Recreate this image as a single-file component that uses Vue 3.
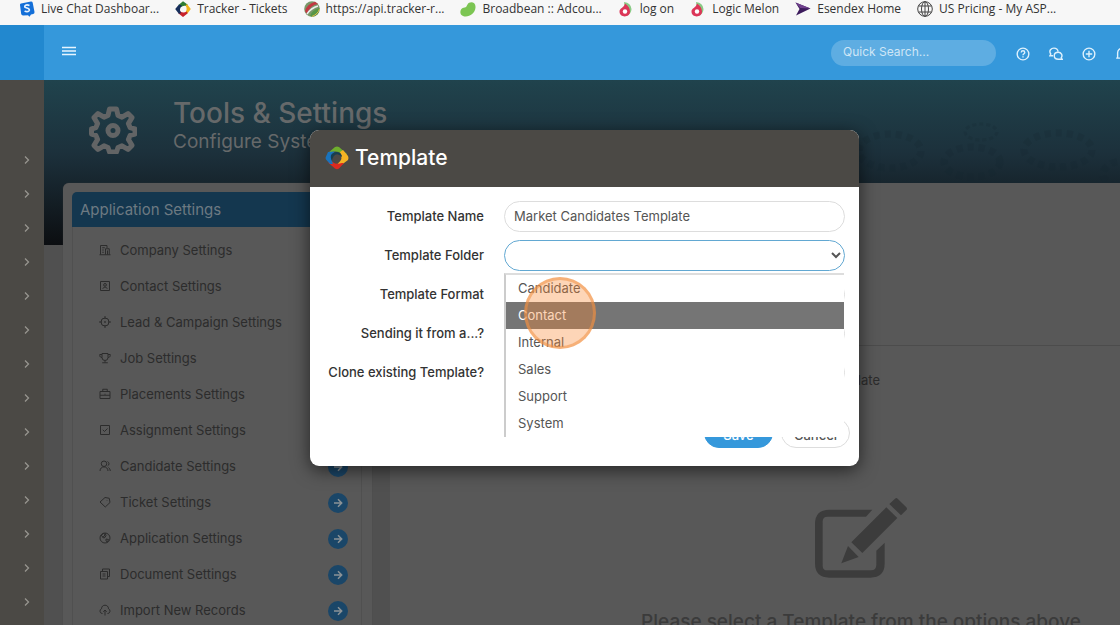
<script setup>
import { ref } from 'vue'

const bookmarks = [
  { icon: 'chat', text: 'Live Chat Dashboar...' },
  { icon: 'tracker', text: 'Tracker - Tickets' },
  { icon: 'api', text: 'https://api.tracker-r...' },
  { icon: 'bean', text: 'Broadbean :: Adcou...' },
  { icon: 'melon', text: 'log on' },
  { icon: 'melon', text: 'Logic Melon' },
  { icon: 'esendex', text: 'Esendex Home' },
  { icon: 'globe', text: 'US Pricing - My ASP...' }
]

const settings = [
  { text: 'Company Settings', d: 'M1 21.500h22M3 21V3h13v5M13 21V9.500h7.500V21M6.500 7.500h5M6.500 12h3M6.500 16.500h3M17 13v8' },
  { text: 'Contact Settings', d: 'M3 3h18v18H3zM12 7a2.500 2.500 0 1 0 0 5.500A2.500 2.500 0 1 0 12 7M7.500 17.500c1-4 8-4 9 0' },
  { text: 'Lead & Campaign Settings', d: 'M12 4a8 8 0 1 0 0 16 8 8 0 1 0 0-16M12 0v6M12 18v6M0 12h6M18 12h6M12 11a1 1 0 1 0 0 2 1 1 0 1 0 0-2' },
  { text: 'Job Settings', d: 'M6 3h12v8a6 6 0 0 1-12 0zM12 17v4M6.500 21.500h11M6 5H1.500v2c0 2.500 2 4 4.500 4M18 5h4.500v2c0 2.500-2 4-4.500 4' },
  { text: 'Placements Settings', d: 'M2 7h20v14H2zM7.500 7V2.500h9V7M2 14.500h20M11 12.500h2' },
  { text: 'Assignment Settings', d: 'M3 3h18v18H3zM7.500 11.500l3.500 3.500 6-6' },
  { text: 'Candidate Settings', d: 'M10 2a5.500 5.500 0 1 0 0 11 5.500 5.500 0 1 0 0-11M2 22c0-11 16-11 16 0M17 3c4 2 4 7 0 9M19 15c2 1.500 3.500 4 3.500 7' },
  { text: 'Ticket Settings', d: 'M12 3l8.500 1.500L22 13l-9.500 9L2 12zM16 8.500v1' },
  { text: 'Application Settings', d: 'M12 2a10 10 0 1 0 0 20 10 10 0 1 0 0-20M4 6l5 6 3-1 2-4-2-5M5 6l4-3 3 2-2 4-3 1M14 14l5 1-2 5-3-2z' },
  { text: 'Document Settings', d: 'M7 7V2h14v15h-4M3 7h14v15H3zM7 12h6M7 16h6' },
  { text: 'Import New Records', d: 'M7 19H6a5 5 0 0 1-1-9.500C5 0 19 0 19 9.500A5 5 0 0 1 18 19h-1M12 23V12M8.500 15.500l3.500-3.500 3.500 3.500' }
]

const folders = ['Candidate', 'Contact', 'Internal', 'Sales', 'Support', 'System']
const active = ref('Contact')
const folder = ref('')
const name = ref('Market Candidates Template')
const query = ref('')
</script>

<template>
  <div class="window">
    <nav class="bookmarks" aria-label="Bookmarks">
      <a v-for="b in bookmarks" :key="b.text" href="#" class="bookmark">
        <svg class="fav" viewBox="0 0 16 16" aria-hidden="true">
          <template v-if="b.icon === 'chat'">
            <path d="M2 2.500 12 .5q1.500 0 1.700 1.200L15.500 11q.2 1.500-1.200 1.900l-2.300.6-1.500 2.300-1.500-1.600-5 .2q-1.500 0-1.800-1.400L1 4Q.8 2.800 2 2.500z" fill="#146fd8" />
            <path d="M10.500 4.500Q7 3 5.800 5.200C5 7.500 10.800 6.500 10.300 9.200 9.500 11.200 7 10.800 5.600 10" fill="none" stroke="#e6f2ff" stroke-width="1.700" />
          </template>
          <template v-else-if="b.icon === 'tracker'">
            <path d="M8 .2 12.500 3.500 13 6Q9 3.500 5.500 6.500L3.500 4z" fill="#2f7d33" />
            <path d="M12 3 15.800 8 12.500 12.500 10 12Q13 8 10.500 4.500z" fill="#f0b51e" />
            <path d="M12.500 12.500 8 16 3.500 12.500 4.500 9.500Q7 13 12 10.500z" fill="#c8232c" />
            <path d="M4 3.500.2 8 4 13l2-1Q3.500 8 7 4.500z" fill="#172f5c" />
          </template>
          <template v-else-if="b.icon === 'api'">
            <circle cx="8" cy="8" r="7.800" fill="#79986a" />
            <path d="M1 10Q3 3 11 .8L14 3Q6 4 3 13z" fill="#c23943" />
            <path d="M3 13Q7 7 14 5" fill="none" stroke="#eee" stroke-width="1.500" />
            <path d="M6 15Q8 9 15.500 7 15 15 8 15.800z" fill="#559746" />
            <path d="M8 15.500Q14 13 15.500 8" fill="none" stroke="#e2bd50" />
          </template>
          <path v-else-if="b.icon === 'bean'" d="M4.500 6.500Q6 7 7.500 3.500C9 0 16 0 15.500 6.500 15 13 8 17 3 15-1 13.500-.5 7 4.500 6.500z" fill="#7cc553" />
          <template v-else-if="b.icon === 'melon'">
            <path d="M6 1Q13 2 13.500 8 13.500 13 8 15z" fill="#8acb86" />
            <path d="M7 2.500Q12 6 12 10.500C12 17 1.500 17 1.500 10.500 1.500 7 6 7 7 2.500z" fill="#dc3658" />
            <circle cx="7" cy="10.500" r="2.200" fill="#fff" />
          </template>
          <template v-else-if="b.icon === 'esendex'">
            <path d="M.5 1.500 15.500 7.500 1 14.500 4.500 8z" fill="#3c1b5c" />
            <path d="M.5 1.500 15.500 7.500 5 7z" fill="#70408d" />
          </template>
          <g v-else fill="none" stroke="#444" stroke-width="1">
            <circle cx="8" cy="8" r="7.300" />
            <ellipse cx="8" cy="8" rx="3.500" ry="7.300" />
            <path d="M8 .7v14.600M1.500 5h13M1.500 11h13" />
          </g>
        </svg>
        <span>{{ b.text }}</span>
      </a>
    </nav>

    <div class="page">
      <header class="topbar">
        <div class="brand"></div>
        <button class="plain menu" aria-label="Toggle menu">
          <svg viewBox="0 0 14 10"><path d="M0 1.500h14M0 5h14M0 8.500h14" stroke="#e8f5ff" stroke-width="1.600" /></svg>
        </button>
        <input v-model="query" class="search" type="text" aria-label="Quick Search" placeholder="Quick Search..." />
        <div class="actions">
          <button class="plain" aria-label="Help">
            <svg viewBox="0 0 24 24"><circle cx="12" cy="12" r="10" /><path d="M9 9.500c0-4 6-4 6 0 0 2-3 2-3 4.500M12 16v2" /></svg>
          </button>
          <button class="plain" aria-label="Messages">
            <svg viewBox="0 0 24 24"><path d="M7 15H1.500l1.500-3C-1 6 4 2 8.500 2c4 0 6.500 2.500 7 5.500M16 9c-5 0-7 3-7 6 0 3.500 3 6 7 6h6.500l-1.500-2.500c3-4 0-9.500-5-9.500z" /></svg>
          </button>
          <button class="plain" aria-label="Add">
            <svg viewBox="0 0 24 24"><circle cx="12" cy="12" r="10" /><path d="M12 6.500v11M6.500 12h11" /></svg>
          </button>
          <button class="plain" aria-label="Notifications">
            <svg viewBox="0 0 24 24"><path d="M2 19h20M4.500 18.500V10c0-10 15-10 15 0v8.500M9 22.500h6" /></svg>
          </button>
        </div>
      </header>

      <div class="body">
        <aside class="rail">
          <button v-for="n in 14" :key="n" class="plain rail-item" :aria-label="'Expand section ' + n">
            <svg viewBox="0 0 6 8"><path d="M1 .5 4.500 4 1 7.500" fill="none" stroke="#97958f" stroke-width="1.300" /></svg>
          </button>
        </aside>

        <main class="main">
          <section class="hero">
            <svg class="hero-gear" viewBox="0 0 48 48" aria-hidden="true">
              <path d="M20.500 3h7l1.500 6.500 4 1.700 6-3.600 4 4-3.600 6 1.700 4 4.900 1.400v5l-4.900 1.400-1.700 4 3.600 6-4 4-6-3.600-4 1.700-1.500 4.500h-7L19 41.500l-4-1.700-6 3.600-4-4 3.600-6-1.700-4L2.500 28v-5l4.400-1.400 1.700-4-3.600-6 4-4 6 3.600 4-1.700z" fill="none" stroke="#626465" stroke-width="5" stroke-linejoin="round" />
              <circle cx="24" cy="24.500" r="5" fill="none" stroke="#626465" stroke-width="5" />
            </svg>
            <div class="hero-text">
              <h1>Tools &amp; Settings</h1>
              <p>Configure System</p>
            </div>
            <svg class="cogs" viewBox="0 0 280 62" aria-hidden="true">
              <g fill="none" stroke="#14262f">
                <ellipse cx="50" cy="31" rx="31" ry="17" stroke-width="7" stroke-dasharray="6 5" />
                <ellipse cx="132" cy="42" rx="28" ry="15" stroke-width="7" stroke-dasharray="6 5" />
                <ellipse cx="141" cy="12" rx="16" ry="8" stroke-width="3" stroke-dasharray="4 3" />
                <ellipse cx="218" cy="30" rx="34" ry="17" stroke-width="7" stroke-dasharray="6 5" />
                <ellipse cx="283" cy="54" rx="20" ry="13" stroke-width="7" stroke-dasharray="6 5" />
              </g>
            </svg>
          </section>

          <div class="columns">
            <section class="panel">
              <h2>Application Settings</h2>
              <ul class="settings">
                <li v-for="s in settings" :key="s.text">
                  <svg class="s-icon" viewBox="0 0 24 24" aria-hidden="true"><path :d="s.d" /></svg>
                  <span>{{ s.text }}</span>
                  <button class="plain go" :aria-label="'Open ' + s.text">
                    <svg viewBox="0 0 10 10"><path d="M1 5h7.500M5 1.300 8.700 5 5 8.700" fill="none" stroke="#8b9296" stroke-width="1.500" /></svg>
                  </button>
                </li>
              </ul>
            </section>
            <section class="detail">
              <div class="detail-head"></div>
              <div class="detail-row"><span>Template</span></div>
              <div class="empty">
                <svg viewBox="0 0 276 240" aria-hidden="true">
                  <path transform="translate(-585 -52)" d="M757 87H628Q585 87 585 130V248Q585 291 628 291H751Q794 291 794 248V186L769 210V252Q769 269 753 269H622Q608 269 608 255V122Q608 108 622 108H738ZM799 80 832 112 727 217 694 185ZM825 54Q829 50 833 54L859 80Q863 84 859 88L843 104 808 70ZM684 196 716 229 664 248Z" fill="#3c3c3c" />
                </svg>
                <p>Please select a Template from the options above</p>
              </div>
            </section>
          </div>
        </main>
      </div>
    </div>

    <div class="overlay">
      <form class="dialog" role="dialog" aria-labelledby="dialog-title" @submit.prevent>
        <div class="dialog-head">
          <svg viewBox="0 0 24 24" aria-hidden="true">
            <path d="M3 7 10 1Q12 0 14 1L22 8 19 13Q17 5 10 5.500 6 5.500 3 7z" fill="#6fae2d" />
            <path d="M18 4 23 10Q24 12 23 14L15 20 12.500 18Q19 13 15 6z" fill="#f5b324" />
            <path d="M19 17 14 22.500Q12 24 10 22.500L3.500 17 5 12Q8 20 17 17z" fill="#dc2a20" />
            <path d="M3 6 10 5.500Q4 10 8 18L5 18 1 13.500Q0 12 1 10.500z" fill="#1973bd" />
            <path d="M7 15Q3 7 12 6 17 7 17 11 12 6 8.500 10.500 7 13 7 15z" fill="#173f50" />
          </svg>
          <h2 id="dialog-title">Template</h2>
        </div>
        <div class="fields">
          <label for="t-name">Template Name</label>
          <input id="t-name" v-model="name" type="text" />
          <label for="t-folder">Template Folder</label>
          <div class="combo">
            <select id="t-folder" v-model="folder" class="focused">
              <option value=""></option>
              <option v-for="f in folders" :key="f">{{ f }}</option>
            </select>
            <ul class="popup" role="listbox" aria-label="Template Folder">
              <li v-for="f in folders" :key="f" role="option" :aria-selected="f === active" :class="{ active: f === active }">{{ f }}</li>
            </ul>
            <span class="click-ring"></span>
          </div>
          <label for="t-format">Template Format</label>
          <input id="t-format" type="text" />
          <label for="t-from">Sending it from a...?</label>
          <input id="t-from" type="text" />
          <label for="t-clone">Clone existing Template?</label>
          <input id="t-clone" type="text" />
        </div>
        <div class="buttons">
          <button class="btn save" type="submit">Save</button>
          <button class="btn cancel" type="button">Cancel</button>
        </div>
      </form>
    </div>
  </div>
</template>

<style>
body {
  overflow: hidden;
  background: #505050;
}
</style>

<style scoped>
* {
  box-sizing: border-box;
}
.window {
  position: relative;
  height: 100vh;
  overflow: hidden;
  font-family: Inter, "Open Sans", sans-serif;
  font-size: 13px;
}
h1, h2, p, ul {
  margin: 0;
  padding: 0;
}
ul {
  list-style: none;
}
svg {
  display: block;
}
.plain {
  border: 0;
  padding: 0;
  background: none;
}

/* Bookmark strip */
.bookmarks {
  display: flex;
  gap: 16px;
  height: 25px;
  padding: 0 19px;
  background: #f7f7f7;
  font-family: "Open Sans", "Noto Sans", sans-serif;
  font-size: 12px;
  line-height: 18px;
}
.bookmark {
  display: flex;
  gap: 6px;
  flex: none;
  color: #333;
  text-decoration: none;
}
.fav {
  width: 16px;
  height: 16px;
  margin-top: 1px;
}

/* Top bar */
.page {
  width: calc(100% + 49px);
}
.topbar {
  display: flex;
  align-items: center;
  height: 55px;
  background: #3598db;
}
.brand {
  width: 44px;
  height: 100%;
  background: #2288cf;
}
.menu {
  margin: 0 auto 4px 18px;
}
.menu svg {
  width: 14px;
  height: 10px;
}
.search {
  width: 165px;
  height: 26px;
  border: 0;
  border-radius: 13px;
  padding: 0 12px 2px;
  background: #5eade2;
  color: #fff;
  font: 12px Inter, sans-serif;
}
.search::placeholder {
  color: #cfe6f6;
  opacity: 1;
}
.actions {
  display: flex;
  gap: 19px;
  margin: 2px 40px 0 20px;
}
.actions svg {
  width: 14px;
  height: 14px;
  fill: none;
  stroke: #def1fd;
  stroke-width: 2.400;
}

/* Body */
.body {
  display: flex;
}
.rail {
  width: 44px;
  flex: none;
  padding: 63px 14px 40px 0;
  background: #4b4945;
}
.rail-item {
  display: flex;
  align-items: center;
  justify-content: flex-end;
  width: 100%;
  height: 34px;
}
.rail-item svg {
  width: 6px;
  height: 8px;
}
.main {
  flex: 1;
  min-width: 0;
  background: #505050;
}
.hero {
  position: relative;
  display: flex;
  gap: 36px;
  height: 165px;
  padding: 16px 0 0 45px;
  background: linear-gradient(#20434d, #1c303b 45%, #0c0e11);
  color: #66696a;
}
.hero-gear {
  width: 48px;
  height: 48px;
  margin-top: 10px;
}
.hero h1 {
  font-size: 28px;
  font-weight: 500;
  line-height: 34px;
}
.hero p {
  font-size: 19px;
  line-height: 24px;
}
.cogs {
  position: absolute;
  top: 40px;
  right: 49px;
  width: 280px;
  height: 62px;
  opacity: 0.2;
}
.columns {
  position: relative;
  display: flex;
  gap: 18px;
  margin: -62px -163px 0 19px;
}
.panel {
  width: 309px;
  flex: none;
  padding: 9px 10px 9px 9px;
  border-radius: 6px 6px 0 0;
  background: #585858;
  box-shadow: 0 0 1px #444;
}
.panel h2 {
  padding: 0 8px;
  border-radius: 5px 5px 0 0;
  background: #14374f;
  color: #6d7a82;
  font-size: 15px;
  font-weight: 400;
  line-height: 35px;
}
.settings {
  padding: 5px 13px 4px 26px;
  border: 1px solid #505050;
  border-top: 0;
  color: #2c2c2c;
}
.settings li {
  display: flex;
  align-items: center;
  gap: 9px;
  height: 36px;
}
.s-icon {
  width: 12px;
  height: 12px;
  fill: none;
  stroke: #2c2c2c;
  stroke-width: 2;
}
.go {
  display: grid;
  place-items: center;
  width: 20px;
  height: 20px;
  margin: 2px 0 0 auto;
  border-radius: 50%;
  background: #1a4668;
}
.go svg {
  width: 10px;
  height: 10px;
}
.detail {
  flex: 1;
  background: #585858;
}
.detail-head {
  height: 163px;
  border-bottom: 1px solid #4c4c4c;
}
.detail-row {
  display: flex;
  width: 490px;
  height: 68px;
  align-items: center;
  justify-content: flex-end;
  color: #2c2c2c;
}
.empty {
  display: flex;
  flex-direction: column;
  align-items: center;
  padding-top: 84px;
  color: #3b3b3b;
}
.empty svg {
  width: 92px;
  height: 80px;
}
.empty p {
  margin-top: 30px;
  font-size: 19px;
  font-weight: 500;
  line-height: 28px;
}

/* Dialog */
.overlay {
  position: absolute;
  inset: 0 -49px 0 0;
  display: flex;
  align-items: flex-start;
  justify-content: center;
  padding-top: 130px;
}
.dialog {
  width: 100%;
  max-width: 549px;
  border-radius: 9px;
  background: #fff;
  box-shadow: 0 4px 18px rgba(0, 0, 0, 0.6);
}
.dialog-head {
  display: flex;
  align-items: center;
  gap: 6px;
  height: 57px;
  padding: 0 15px 2px;
  border-radius: 9px 9px 0 0;
  background: #4b4945;
  color: #fff;
}
.dialog-head svg {
  width: 24px;
  height: 24px;
}
.dialog-head h2 {
  font-size: 21px;
  font-weight: 500;
}
.fields {
  display: grid;
  grid-template-columns: 174px 1fr;
  column-gap: 20px;
  row-gap: 8px;
  align-items: center;
  padding: 14px 14px 0 0;
}
.fields label {
  padding-bottom: 2px;
  color: #333;
  font-weight: 500;
  text-align: right;
}
.fields input,
.fields select {
  display: block;
  width: 100%;
  height: 31px;
  border: 1px solid #ddd;
  border-radius: 16px;
  padding: 0 9px 2px;
  background: #fff;
  color: #555;
  font: 13px Inter, sans-serif;
  outline: 0;
}
.fields .focused {
  padding: 0 3px;
  border-color: #62a8d2;
}
.combo {
  position: relative;
}
.popup {
  position: absolute;
  z-index: 1;
  top: 33px;
  left: 0;
  right: 1px;
  border-top: 2px solid #ddd;
  border-left: 2px solid #ccc;
  background: #fff;
  color: #555;
}
.popup li {
  padding: 0 12px;
  line-height: 27px;
}
.popup .active {
  background: #757575;
  color: #fff;
}
.click-ring {
  position: absolute;
  z-index: 2;
  top: 37px;
  left: 20px;
  width: 72px;
  height: 72px;
  border: 3px solid rgba(240, 145, 70, 0.55);
  border-radius: 50%;
  background: rgba(250, 135, 50, 0.35);
}
.buttons {
  display: flex;
  justify-content: flex-end;
  gap: 8px;
  padding: 30px 9px 18px;
}
.btn {
  width: 69px;
  height: 30px;
  border: 1px solid #ddd;
  border-radius: 15px;
  padding: 3px 0 0;
  background: #fff;
  color: #555;
  font: 500 13px Inter, sans-serif;
}
.btn.save {
  border-color: #3598db;
  background: #3598db;
  color: #fff;
}
</style>
